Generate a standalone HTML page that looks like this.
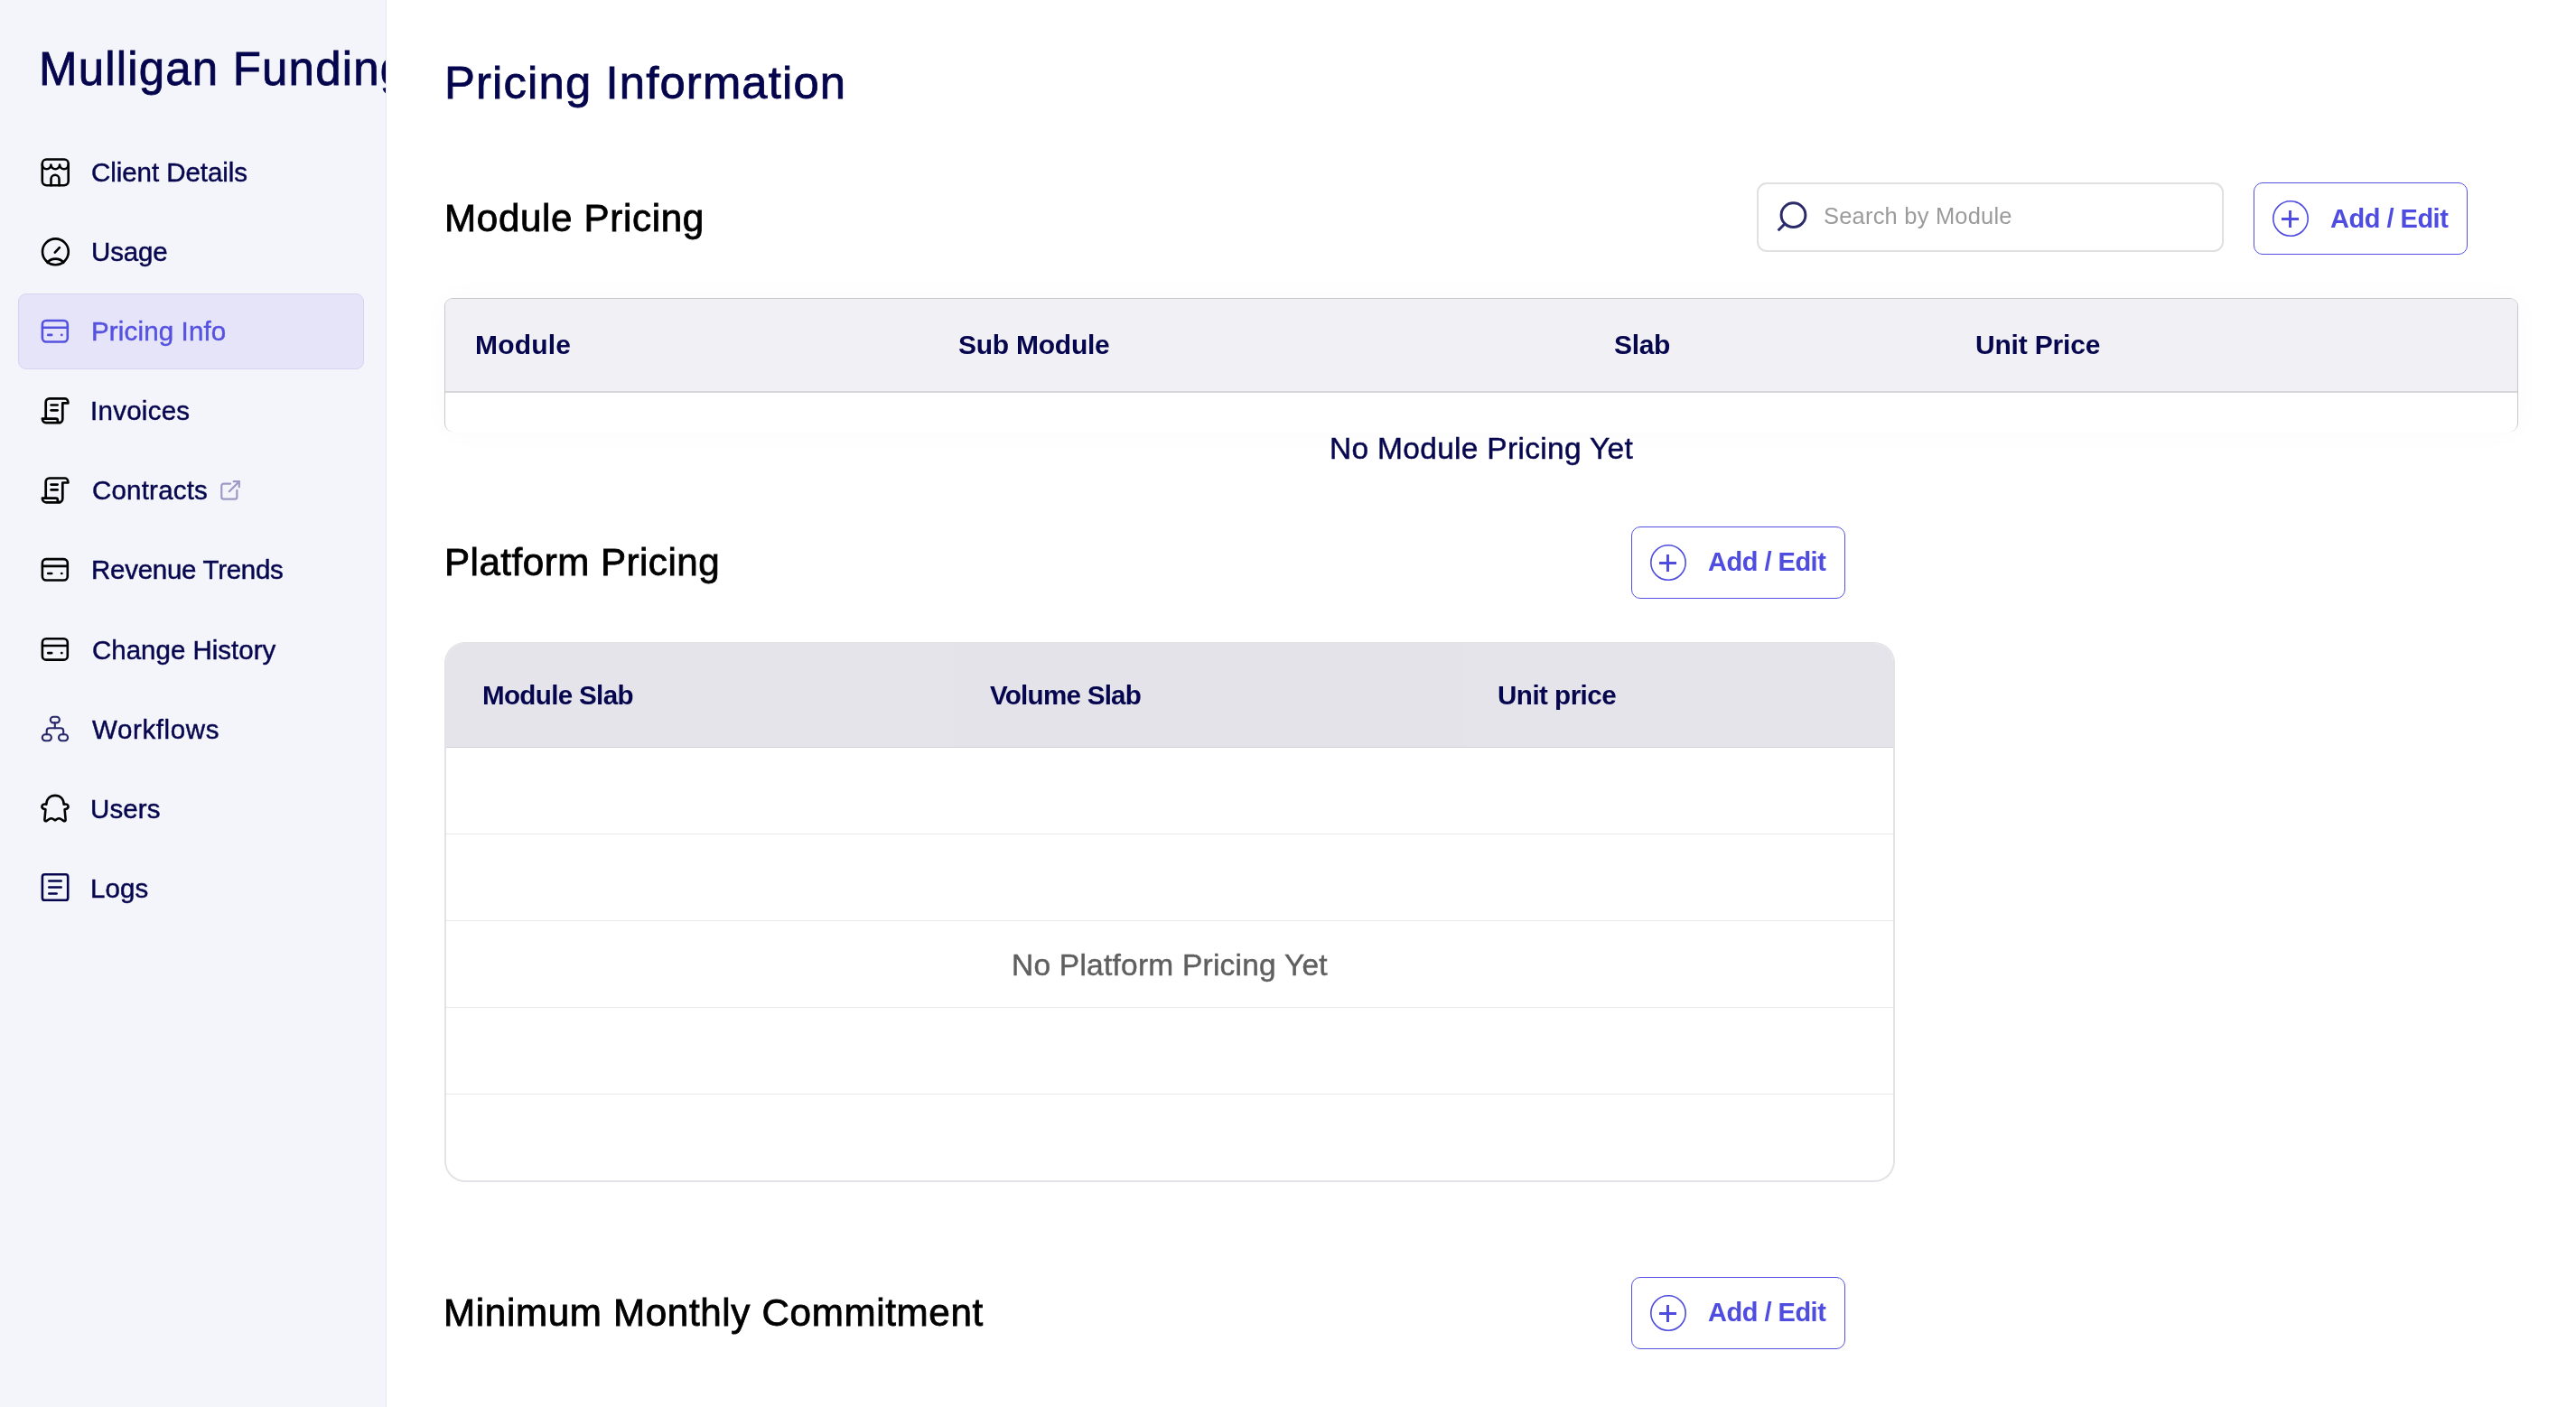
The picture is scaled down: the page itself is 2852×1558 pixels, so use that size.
<!DOCTYPE html>
<html><head><meta charset="utf-8">
<style>
html,body{margin:0;padding:0;}
body{width:2852px;height:1558px;overflow:hidden;background:#fff;position:relative;font-family:"Liberation Sans",sans-serif;}
.t{position:absolute;white-space:nowrap;line-height:1;will-change:transform;}
.ic{position:absolute;overflow:visible;}
#side{position:absolute;left:0;top:0;width:427px;height:1558px;background:#f4f5fa;border-right:1px solid #e7e5f8;overflow:hidden;}
#act{position:absolute;left:20px;top:325px;width:381px;height:82px;border:1px solid #d6d3f3;border-radius:9px;background:#e6e4f8;}
#search{position:absolute;left:1945px;top:202px;width:513px;height:73px;border:2px solid #e0e0e0;border-radius:11px;}
.btn{position:absolute;width:235px;height:78px;border:1.5px solid #5552e3;border-radius:10px;box-sizing:content-box;}
#mt{position:absolute;left:492px;top:330px;width:2294px;height:147px;border:1px solid #c9c9cd;border-bottom:none;border-radius:9px 9px 9px 9px;overflow:hidden;box-shadow:0 0 36px rgba(0,0,0,0.024);}
#mth{position:absolute;left:0;top:0;right:0;height:102px;background:#f1f0f5;border-bottom:2px solid #d8d8dc;}
#pt{position:absolute;left:492px;top:711px;width:1602px;height:595px;border:2px solid #e3e3e7;border-top:1px solid #e2e2e4;border-radius:23px;overflow:hidden;}
#pth{position:absolute;left:0;top:0;right:0;height:115px;background:linear-gradient(90deg,#e5e4ea 0,#e5e4ea 562px,#e4e3e9 562px,#e4e3e9 1125px,#e5e4ea 1125px);border-bottom:1px solid #cfcfd6;}
.rl{position:absolute;left:0;right:0;height:1px;background:#e8e8ea;}
</style></head><body>
<div id="side"><div class="t" id="logo" style="left:43.4px;top:50.6px;font-size:51px;color:#05054e;font-weight:400;letter-spacing:1.179px;-webkit-text-stroke:0.8px #05054e;">Mulligan Funding</div>
<div id="act"></div><div class="t" id="nav0" style="left:101.3px;top:175.9px;font-size:29.5px;color:#07074f;font-weight:400;letter-spacing:-0.062px;-webkit-text-stroke:0.45px #07074f;">Client Details</div>
<div class="t" id="nav1" style="left:100.8px;top:264.0px;font-size:29.5px;color:#07074f;font-weight:400;letter-spacing:-0.150px;-webkit-text-stroke:0.45px #07074f;">Usage</div>
<div class="t" id="nav2" style="left:101.1px;top:352.1px;font-size:29.5px;color:#5552e0;font-weight:400;letter-spacing:0.155px;-webkit-text-stroke:0.45px #5552e0;">Pricing Info</div>
<div class="t" id="nav3" style="left:100.3px;top:440.2px;font-size:29.5px;color:#07074f;font-weight:400;letter-spacing:0.271px;-webkit-text-stroke:0.45px #07074f;">Invoices</div>
<div class="t" id="nav4" style="left:101.5px;top:528.3px;font-size:29.5px;color:#07074f;font-weight:400;letter-spacing:0.200px;-webkit-text-stroke:0.45px #07074f;">Contracts</div>
<div class="t" id="nav5" style="left:101.2px;top:616.4px;font-size:29.5px;color:#07074f;font-weight:400;letter-spacing:-0.277px;-webkit-text-stroke:0.45px #07074f;">Revenue Trends</div>
<div class="t" id="nav6" style="left:101.5px;top:704.5px;font-size:29.5px;color:#07074f;font-weight:400;letter-spacing:-0.004px;-webkit-text-stroke:0.45px #07074f;">Change History</div>
<div class="t" id="nav7" style="left:101.5px;top:792.6px;font-size:29.5px;color:#07074f;font-weight:400;letter-spacing:0.613px;-webkit-text-stroke:0.45px #07074f;">Workflows</div>
<div class="t" id="nav8" style="left:100.3px;top:880.7px;font-size:29.5px;color:#07074f;font-weight:400;letter-spacing:0.100px;-webkit-text-stroke:0.45px #07074f;">Users</div>
<div class="t" id="nav9" style="left:100.3px;top:968.8px;font-size:29.5px;color:#07074f;font-weight:400;letter-spacing:0.100px;-webkit-text-stroke:0.45px #07074f;">Logs</div>
<svg class="ic" style="left:40px;top:170px" width="44" height="44" viewBox="40 170 44 44" fill="none" stroke-linecap="round" stroke-linejoin="round" ><g stroke="#000" stroke-width="2.6"><rect x="46.8" y="176.5" width="28.9" height="28.7" rx="4.6"/><path d="M46.8 182.6a4.82 4.82 0 0 0 9.63 0a4.82 4.82 0 0 0 9.63 0a4.82 4.82 0 0 0 9.63 0"/><path d="M56.5 205.2V198.3a4.5 4.5 0 0 1 9 0V205.2"/></g></svg>
<svg class="ic" style="left:40px;top:256px" width="44" height="44" viewBox="40 256 44 44" fill="none" stroke-linecap="round" stroke-linejoin="round" ><g stroke="#000" stroke-width="2.6"><circle cx="61.4" cy="278.8" r="14.4"/><path d="M60.8 279.6L65.9 274.1"/><path d="M52.6 291C56 285.2 66.8 285.2 70.2 291"/></g></svg>
<svg class="ic" style="left:40px;top:345px" width="44" height="44" viewBox="40 345 44 44" fill="none" stroke-linecap="round" stroke-linejoin="round" ><g stroke="#5552e0" stroke-width="2.6"><rect x="46.9" y="355.05" width="27.9" height="23.4" rx="4.2"/><path d="M47 362.80H74.8"/><path d="M53.2 370.90H57.2"/><path d="M68.2 370.90H68.4"/></g></svg>
<svg class="ic" style="left:40px;top:609px" width="44" height="44" viewBox="40 609 44 44" fill="none" stroke-linecap="round" stroke-linejoin="round" ><g stroke="#000" stroke-width="2.6"><rect x="46.9" y="619.15" width="27.9" height="23.4" rx="4.2"/><path d="M47 626.90H74.8"/><path d="M53.2 635.00H57.2"/><path d="M68.2 635.00H68.4"/></g></svg>
<svg class="ic" style="left:40px;top:698px" width="44" height="44" viewBox="40 698 44 44" fill="none" stroke-linecap="round" stroke-linejoin="round" ><g stroke="#000" stroke-width="2.6"><rect x="46.9" y="707.25" width="27.9" height="23.4" rx="4.2"/><path d="M47 715.00H74.8"/><path d="M53.2 723.10H57.2"/><path d="M68.2 723.10H68.4"/></g></svg>
<svg class="ic" style="left:40px;top:434px" width="44" height="44" viewBox="40 434 44 44" fill="none" stroke-linecap="round" stroke-linejoin="round" ><g transform="translate(0 0.00)" stroke="#000" stroke-width="2.7"><path d="M50.7 463.4V445.4a4 4 0 0 1 4 -4H72.1a3.3 5 0 0 1 3.3 5H69.3V464a4.2 4.2 0 0 1 -4.2 4.2H51a4.1 4.6 0 0 1 -4.1 -4.6H62.2a1.5 1.5 0 0 1 1.5 1.5V465.4a2.8 2.8 0 0 0 2.6 2.8"/><path d="M56.6 448.5H63.6"/><path d="M56.6 454.3H63.6"/></g></svg>
<svg class="ic" style="left:40px;top:522px" width="44" height="44" viewBox="40 522 44 44" fill="none" stroke-linecap="round" stroke-linejoin="round" ><g transform="translate(0 88.10)" stroke="#000" stroke-width="2.7"><path d="M50.7 463.4V445.4a4 4 0 0 1 4 -4H72.1a3.3 5 0 0 1 3.3 5H69.3V464a4.2 4.2 0 0 1 -4.2 4.2H51a4.1 4.6 0 0 1 -4.1 -4.6H62.2a1.5 1.5 0 0 1 1.5 1.5V465.4a2.8 2.8 0 0 0 2.6 2.8"/><path d="M56.6 448.5H63.6"/><path d="M56.6 454.3H63.6"/></g></svg>
<svg class="ic" style="left:236px;top:524px" width="36" height="36" viewBox="236 524 36 36" fill="none" stroke-linecap="round" stroke-linejoin="round" ><g transform="translate(240.4 528.3) scale(1.22)" stroke="#9a9ac4" stroke-width="1.8"><path d="M12 6h-6a2 2 0 0 0 -2 2v10a2 2 0 0 0 2 2h10a2 2 0 0 0 2 -2v-6"/><path d="M11 13l9 -9"/><path d="M15 4h5v5"/></g></svg>
<svg class="ic" style="left:40px;top:784px" width="44" height="44" viewBox="40 784 44 44" fill="none" stroke-linecap="round" stroke-linejoin="round" ><g stroke="#27276a" stroke-width="2.1"><rect x="55.8" y="793.8" width="10.1" height="6.6" rx="3.3"/><rect x="46.8" y="813.3" width="10.1" height="6.9" rx="3.4"/><rect x="65" y="813.3" width="10.1" height="6.9" rx="3.4"/><path d="M60.8 800.4V806.3"/><path d="M51.7 813.3V809.3a3 3 0 0 1 3 -3H67.2a3 3 0 0 1 3 3V813.3"/></g></svg>
<svg class="ic" style="left:40px;top:872px" width="44" height="44" viewBox="40 872 44 44" fill="none" stroke-linecap="round" stroke-linejoin="round" ><g transform="translate(40 872)" stroke="#000" stroke-width="2.6"><path d="M11.3 18.8C11.5 12.5 15.5 8.9 21 8.9C26.5 8.9 30.5 12.5 30.7 18.8L31.5 18.6C34 18 35.6 19.5 35.6 21.2C35.6 23 33.8 23.8 31.6 24.3L32.6 35.5C32.7 37 31.5 37.6 30.3 36.8L27.5 35C26 34 24.5 34 23 35L21 36.3L19 35C17.5 34 16 34 14.5 35L11.7 36.8C10.5 37.6 9.3 37 9.4 35.5L10.4 24.3C8.2 23.8 6.4 23 6.4 21.2C6.4 19.5 8 18 10.5 18.6Z"/></g></svg>
<svg class="ic" style="left:40px;top:960px" width="44" height="44" viewBox="40 960 44 44" fill="none" stroke-linecap="round" stroke-linejoin="round" ><g stroke="#05054e" stroke-width="2.6"><rect x="46.9" y="968.3" width="28.3" height="28.5" rx="2.6"/><path d="M54.3 975.5H67.7"/><path d="M54.3 982.5H67.7"/><path d="M54.3 989.5H62.6"/></g></svg>
</div><div class="t" id="title" style="left:491.8px;top:67.1px;font-size:50.8px;color:#05054e;font-weight:400;letter-spacing:1.144px;-webkit-text-stroke:0.8px #05054e;">Pricing Information</div>
<div class="t" id="h1" style="left:491.9px;top:221.1px;font-size:42.2px;color:#000;font-weight:400;letter-spacing:0.638px;-webkit-text-stroke:0.8px #000;">Module Pricing</div>
<div class="t" id="h2" style="left:492.1px;top:602.3px;font-size:42.2px;color:#000;font-weight:400;letter-spacing:0.460px;-webkit-text-stroke:0.8px #000;">Platform Pricing</div>
<div class="t" id="h3" style="left:491.4px;top:1433.2px;font-size:42.2px;color:#000;font-weight:400;letter-spacing:0.636px;-webkit-text-stroke:0.8px #000;">Minimum Monthly Commitment</div>
<div id="search"></div><svg class="ic" style="left:1960px;top:215px" width="50" height="50" viewBox="1960 215 50 50" fill="none" stroke-linecap="round" stroke-linejoin="round" ><g stroke="#2b2b6b" stroke-width="3" stroke-linecap="butt"><circle cx="1985.5" cy="238.2" r="13.4"/><path d="M1968.6 255.3L1976.4 247.5"/></g></svg>
<div class="t" id="ph" style="left:2019.0px;top:227.0px;font-size:25.5px;color:#9b9b9b;font-weight:400;letter-spacing:0.200px;">Search by Module</div>
<div class="btn" style="left:2495px;top:202px"></div>
<svg class="ic" style="left:2505px;top:212px" width="62" height="60" viewBox="2505 212 62 60" fill="none" stroke-linecap="round" stroke-linejoin="round" ><g stroke="#4f4de0"><circle cx="2536" cy="242" r="19.2" stroke-width="1.6"/><path d="M2526 242.5H2545M2535.5 233V252" stroke-width="3" stroke-linecap="butt"/></g></svg>
<div class="t" id="b1" style="left:2579.5px;top:227.6px;font-size:29px;color:#4f4de0;font-weight:700;letter-spacing:-0.500px;">Add / Edit</div>
<div class="btn" style="left:1806px;top:583px"></div>
<svg class="ic" style="left:1816px;top:593px" width="62" height="60" viewBox="1816 593 62 60" fill="none" stroke-linecap="round" stroke-linejoin="round" ><g stroke="#4f4de0"><circle cx="1847" cy="623" r="19.2" stroke-width="1.6"/><path d="M1837 623.5H1856M1846.5 614V633" stroke-width="3" stroke-linecap="butt"/></g></svg>
<div class="t" id="b2" style="left:1890.8px;top:608.4px;font-size:29px;color:#4f4de0;font-weight:700;letter-spacing:-0.500px;">Add / Edit</div>
<div class="btn" style="left:1806px;top:1414px"></div>
<svg class="ic" style="left:1816px;top:1424px" width="62" height="60" viewBox="1816 1424 62 60" fill="none" stroke-linecap="round" stroke-linejoin="round" ><g stroke="#4f4de0"><circle cx="1847" cy="1454" r="19.2" stroke-width="1.6"/><path d="M1837 1454.5H1856M1846.5 1445V1464" stroke-width="3" stroke-linecap="butt"/></g></svg>
<div class="t" id="b3" style="left:1890.8px;top:1439.4px;font-size:29px;color:#4f4de0;font-weight:700;letter-spacing:-0.500px;">Add / Edit</div>
<div id="mt"><div id="mth"></div></div><div class="t" id="mh1" style="left:526.3px;top:366.8px;font-size:30px;color:#06064f;font-weight:700;letter-spacing:0.200px;">Module</div>
<div class="t" id="mh2" style="left:1061.4px;top:366.8px;font-size:30px;color:#06064f;font-weight:700;letter-spacing:-0.244px;">Sub Module</div>
<div class="t" id="mh3" style="left:1787.0px;top:366.8px;font-size:30px;color:#06064f;font-weight:700;letter-spacing:-0.333px;">Slab</div>
<div class="t" id="mh4" style="left:2186.6px;top:366.8px;font-size:30px;color:#06064f;font-weight:700;letter-spacing:-0.189px;">Unit Price</div>
<div class="t" id="nomod" style="left:1472.0px;top:479.6px;font-size:33.5px;color:#07074f;font-weight:400;letter-spacing:0.305px;-webkit-text-stroke:0.45px #07074f;">No Module Pricing Yet</div>
<div id="pt"><div id="pth"></div><div class="rl" style="top:211px"></div><div class="rl" style="top:307px"></div><div class="rl" style="top:403px"></div><div class="rl" style="top:499px"></div></div><div class="t" id="ph1" style="left:533.6px;top:755.2px;font-size:29.6px;color:#06064f;font-weight:700;letter-spacing:-0.680px;">Module Slab</div>
<div class="t" id="ph2" style="left:1096.3px;top:755.2px;font-size:29.6px;color:#06064f;font-weight:700;letter-spacing:-0.750px;">Volume Slab</div>
<div class="t" id="ph3" style="left:1658.0px;top:755.2px;font-size:29.6px;color:#06064f;font-weight:700;letter-spacing:-0.533px;">Unit price</div>
<div class="t" id="noplat" style="left:1120.0px;top:1052.3px;font-size:33.5px;color:#5f5f5f;font-weight:400;letter-spacing:0.232px;-webkit-text-stroke:0.45px #5f5f5f;">No Platform Pricing Yet</div>

</body></html>
